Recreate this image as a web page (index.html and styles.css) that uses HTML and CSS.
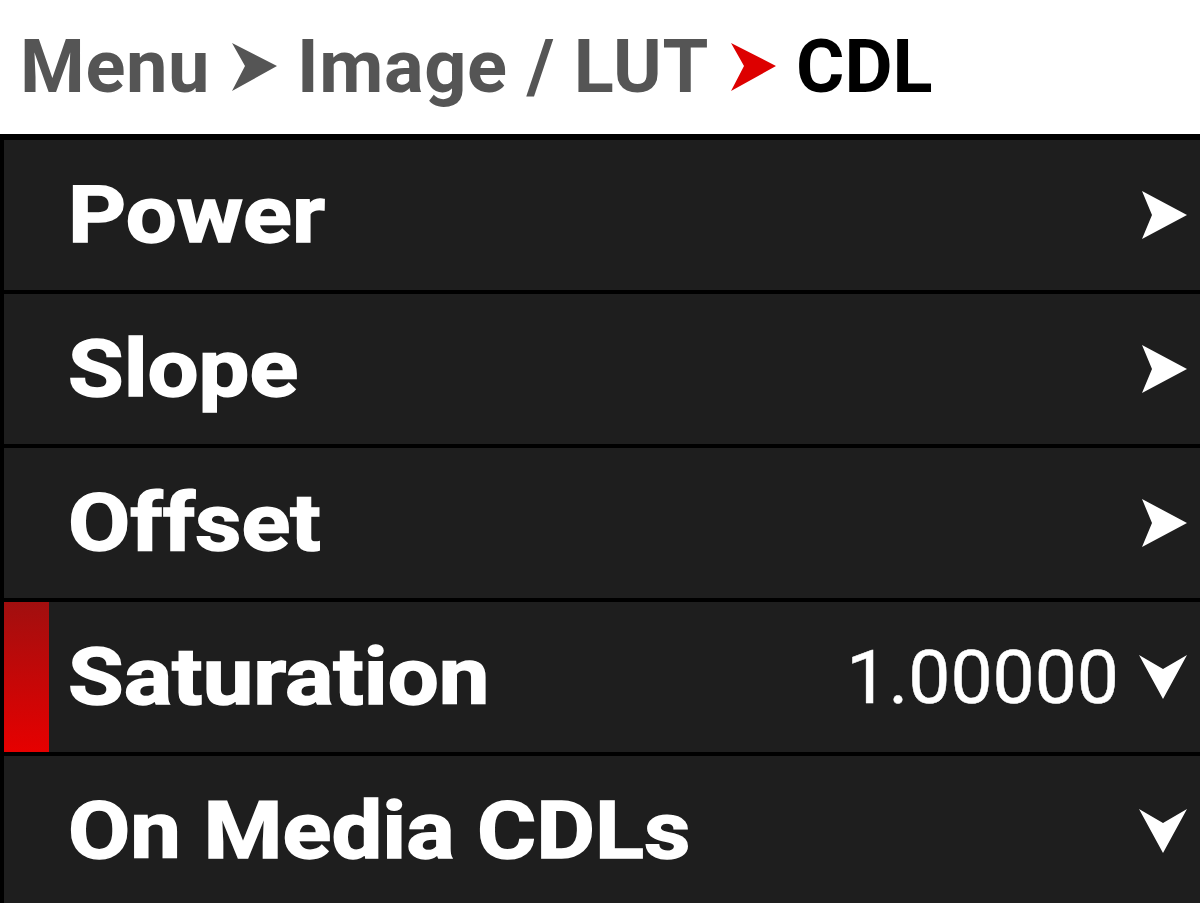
FILE: index.html
```html
<!DOCTYPE html>
<html>
<head>
<meta charset="utf-8">
<link rel="stylesheet" href="styles.css">
</head>
<body>
<header class="crumbs">
  <span class="crumb">Menu</span>
  <svg class="sep" viewBox="0 0 45 48"><path d="M0 0 L45 23 L0 48 L13 23 Z" fill="#555"/></svg>
  <span class="crumb">Image / LUT</span>
  <svg class="sep" viewBox="0 0 45 48"><path d="M0 0 L45 23 L0 48 L13 23 Z" fill="#dd0000"/></svg>
  <span class="crumb current">CDL</span>
</header>
<main class="list">
  <div class="row">
    <span class="mark"></span>
    <span class="label">Power</span>
    <svg class="icon" viewBox="0 0 45 48"><path d="M0 0 L45 24 L0 48 L10 24 Z" fill="#fff"/></svg>
  </div>
  <div class="row">
    <span class="mark"></span>
    <span class="label">Slope</span>
    <svg class="icon" viewBox="0 0 45 48"><path d="M0 0 L45 24 L0 48 L10 24 Z" fill="#fff"/></svg>
  </div>
  <div class="row">
    <span class="mark"></span>
    <span class="label">Offset</span>
    <svg class="icon" viewBox="0 0 45 48"><path d="M0 0 L45 24 L0 48 L10 24 Z" fill="#fff"/></svg>
  </div>
  <div class="row selected">
    <span class="mark"></span>
    <span class="label">Saturation</span>
    <span class="value">1.00000</span>
    <svg class="icon down" viewBox="0 0 48 44"><path d="M0 0 L24 14 L48 0 L24 44 Z" fill="#fff"/></svg>
  </div>
  <div class="row">
    <span class="mark"></span>
    <span class="label">On Media CDLs</span>
    <svg class="icon down" viewBox="0 0 48 44"><path d="M0 0 L24 14 L48 0 L24 44 Z" fill="#fff"/></svg>
  </div>
</main>
</body>
</html>
```

FILE: styles.css
```css
html, body {
  margin: 0;
  padding: 0;
  background: #000;
}
body {
  width: 1200px;
  height: 903px;
  overflow: hidden;
  font-family: Roboto, "Liberation Sans", sans-serif;
}
.crumbs {
  height: 134px;
  background: #fff;
  display: flex;
  align-items: center;
  padding-left: 20px;
  box-sizing: border-box;
}
.crumb {
  font-weight: 700;
  font-size: 74px;
  color: #555;
  line-height: 1;
  letter-spacing: 0.6px;
}
.crumb.current {
  color: #000;
  letter-spacing: 0;
}
.sep {
  width: 45px;
  height: 48px;
  margin: 0 20px 0 22px;
}
.list {
  display: flex;
  flex-direction: column;
  gap: 4px;
  padding: 6px 0 0 4px;
}
.row {
  height: 150px;
  background: #1e1e1e;
  display: flex;
  align-items: center;
  padding-right: 13px;
}
.mark {
  width: 45px;
  align-self: stretch;
  flex: none;
}
.selected .mark {
  background: linear-gradient(#a10f0f, #e60000);
}
.label {
  margin-left: 19px;
  margin-right: auto;
  font-weight: 700;
  font-size: 80px;
  color: #fff;
  line-height: 1;
  -webkit-text-stroke: 1.5px #fff;
  transform: scaleX(1.13);
  transform-origin: left center;
  flex: none;
}
.value {
  font-weight: 400;
  font-size: 75px;
  color: #fff;
  line-height: 1;
  -webkit-text-stroke: 0.5px #fff;
  margin-right: 20px;
}
.icon {
  width: 45px;
  height: 48px;
  flex: none;
}
.icon.down {
  width: 48px;
  height: 44px;
}
```
